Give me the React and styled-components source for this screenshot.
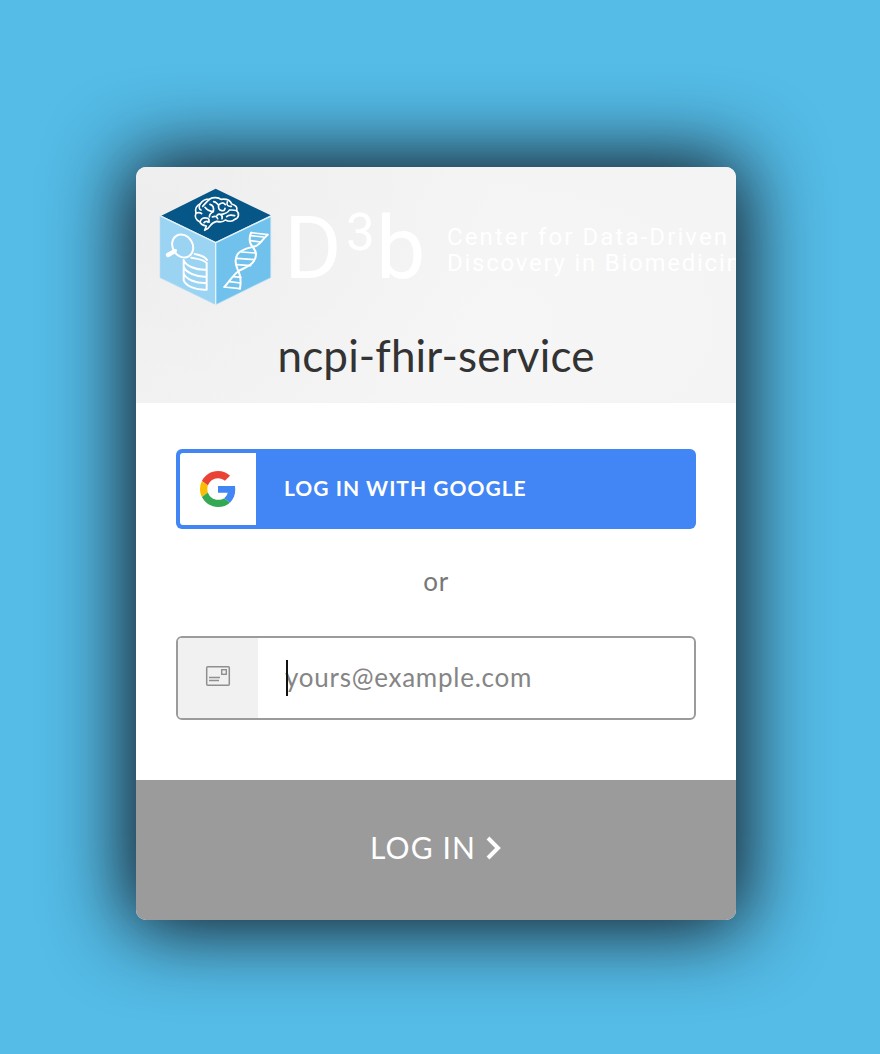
import React from 'react';
import styled, { createGlobalStyle } from 'styled-components';

const GlobalStyle = createGlobalStyle`
  * { box-sizing: border-box; }
  body {
    margin: 0;
    background: #54bce7;
    font-family: Lato, "Liberation Sans", sans-serif;
  }
`;

const Page = styled.main`
  min-height: 1054px;
  padding: 167px 0 0 136px;
  overflow: hidden;
`;

const Card = styled.form`
  width: 600px;
  height: 753px;
  margin: 0;
  display: flex;
  flex-direction: column;
  border-radius: 10px;
  background: #fff;
  box-shadow: 0 0 80px 8px #111118;
`;

const Header = styled.header`
  height: 236px;
  flex: none;
  overflow: hidden;
  border-radius: 10px 10px 0 0;
  background:
    radial-gradient(ellipse 360px 240px at 0 60px, rgba(232, 232, 232, 0.5), rgba(236, 236, 236, 0)),
    radial-gradient(ellipse 420px 260px at 60% 65%, #f6f6f6, #f3f3f3);
`;

const Brand = styled.div`
  display: flex;
  width: 760px;
  height: 148px;
  padding: 13px 0 0 14px;
  color: #fff;
  white-space: nowrap;
`;

const Cube = styled.svg`
  width: 130px;
  height: 135px;
  flex: none;
`;

const Wordmark = styled.div`
  display: flex;
  width: 167px;
  flex: none;
  padding: 26px 0 0 4px;
  font: 400 88px/84px Roboto, sans-serif;
`;

const Letter = styled.span`
  width: ${(p) => p.$width}px;
`;

const Power = styled.sup`
  width: 30px;
  font-size: 51px;
  line-height: 54px;
  vertical-align: baseline;
`;

const Tagline = styled.div`
  padding-top: 44px;
  font: 400 24px/26px Roboto, sans-serif;
`;

const TagLine = styled.div`
  letter-spacing: ${(p) => p.$spacing}px;
`;

const Title = styled.h1`
  margin: 14px 0 0;
  text-align: center;
  font-size: 44px;
  line-height: 52px;
  font-weight: 400;
  letter-spacing: 0.15px;
  font-variant-ligatures: none;
  color: #333;
`;

const Body = styled.section`
  flex: 1;
  padding: 46px 40px 0;
`;

const GoogleButton = styled.button`
  display: flex;
  align-items: center;
  width: 520px;
  height: 80px;
  padding: 4px;
  border: 0;
  border-radius: 6px;
  background: #4285f4;
  color: #fff;
  font: 700 21px/28px Lato, sans-serif;
  letter-spacing: 1px;
`;

const GoogleIconBox = styled.span`
  display: flex;
  align-items: center;
  justify-content: center;
  width: 76px;
  height: 72px;
  margin-right: 28px;
  border-radius: 3px 0 0 3px;
  background: #fff;
`;

const ButtonLabel = styled.span`
  padding-bottom: 3px;
`;

const Separator = styled.p`
  margin: 35px 0 37px;
  text-align: center;
  font-size: 26px;
  line-height: 35px;
  letter-spacing: 0.6px;
  color: #777;
`;

const Field = styled.label`
  display: flex;
  height: 84px;
  border: 2px solid #9b9b9b;
  border-radius: 6px;
  overflow: hidden;
`;

const FieldIcon = styled.span`
  display: flex;
  width: 80px;
  flex: none;
  padding: 27px 0 0 27px;
  background: #f1f1f1;
`;

const InputArea = styled.span`
  position: relative;
  flex: 1;
  display: flex;
`;

const Input = styled.input`
  width: 100%;
  height: 78px;
  padding: 0 0 0 27px;
  border: 0;
  outline: 0;
  background: transparent;
  font: 400 26px/36px Lato, sans-serif;
  letter-spacing: 0.75px;
  &::placeholder { color: #858585; opacity: 1; }
`;

const Caret = styled.i`
  position: absolute;
  left: 28px;
  top: 22px;
  width: 2px;
  height: 36px;
  background: #111;
`;

const Submit = styled.button`
  display: flex;
  align-items: center;
  justify-content: center;
  height: 140px;
  flex: none;
  padding: 0 0 4px;
  border: 0;
  border-radius: 0 0 10px 10px;
  background: #9b9b9b;
  color: #fff;
  font: 400 30px/40px Lato, sans-serif;
  letter-spacing: 1.1px;
`;

const SubmitLabel = styled.span`
  padding-bottom: 2px;
`;

const Chevron = styled.svg`
  width: 16px;
  height: 24px;
  margin-left: 10px;
`;

function CubeLogo() {
  return (
    <Cube viewBox="0 0 390 405" fill="none" stroke="#fff" strokeLinecap="round" strokeLinejoin="round">
      <path d="M34 107 197 187V374L30 293V110Z" fill="#9bd3f3" stroke="none" />
      <path d="M197 187 362 107V293L197 374Z" fill="#70c2ed" stroke="none" />
      <path d="M197 26 362 106 197 186 34 107Z" fill="#075688" stroke="none" />
      <path d="M30 110V293L197 374 362 293V110" stroke="#b9e0f6" strokeWidth="2" />
      <path d="M34 109 197 188 362 109M197 188V374" stroke="#e3f3fb" strokeWidth="4" />
      <g strokeWidth="5">
        <path d="M164 151 169 138C157 136 151 130 149 125C137 120 134 109 138 99C134 87 140 76 151 71C157 62 168 57 179 57C190 51 205 52 213 58C229 56 241 62 245 72C258 75 263 83 260 92C269 101 267 114 254 118C247 126 234 124 226 120C218 128 208 126 200 124C190 126 184 132 181 137C176 145 170 149 164 151Z" />
        <path d="M151 71C144 82 149 89 153 90M139 99C145 97 151 97 155 101M158 79C166 71 170 64 179 58M165 82C172 92 181 94 190 95M190 95C192 84 188 75 180 73M190 95C181 99 178 105 178 111M151 124C153 115 162 111 173 115C178 117 179 124 174 127M162 128C166 122 171 123 178 126M191 65C199 65 200 71 206 75M206 75C214 67 220 67 226 74M206 75C204 85 207 91 215 92C221 93 225 90 225 85M232 65C228 76 235 80 244 79M238 90H246C254 90 259 92 260 92M238 90C232 102 221 101 212 104M201 106C210 98 219 106 216 116M187 111C195 107 201 109 203 116M230 110C237 103 245 105 254 107" />
      </g>
      <ellipse cx="98" cy="198" rx="30" ry="36" transform="rotate(-30 98 198)" strokeWidth="6" />
      <path d="M73 214 54 225" strokeWidth="13" />
      <path d="M71 215 77 211" strokeWidth="8" />
      <g strokeWidth="6">
        <path d="M101 240V301C108 318 137 331 170 329V249M124 233C143 237 161 238 170 249M134 222C152 225 165 230 171 240M101 240C107 257 137 271 170 269M101 261C109 278 138 292 170 290M101 281C109 298 138 311 170 309" />
      </g>
      <g strokeWidth="6">
        <path d="M303 158C297 174 297 189 308 201C320 214 321 229 311 244C301 260 282 263 266 273C251 283 239 303 223 321" />
        <path d="M353 164C339 176 333 191 318 198C300 204 276 205 264 221C253 236 256 252 262 266C272 284 274 302 270 326" />
      </g>
      <g strokeWidth="5">
        <path d="M303 158 353 164M303 167 341 171M301 182 333 186M274 216 317 219M261 235 313 239M260 254 302 257M251 290 273 292M239 305 271 309M223 321 270 326" />
      </g>
    </Cube>
  );
}

function GoogleMark() {
  return (
    <svg width="36" height="36" viewBox="0 0 48 48">
      <path fill="#EA4335" d="M24 9.5c3.54 0 6.71 1.22 9.21 3.6l6.85-6.85C35.9 2.38 30.47 0 24 0 14.62 0 6.51 5.38 2.56 13.22l7.98 6.19C12.43 13.72 17.74 9.5 24 9.5z" />
      <path fill="#4285F4" d="M46.98 24.55c0-1.57-.15-3.09-.38-4.55H24v9.02h12.94c-.58 2.96-2.26 5.48-4.78 7.18l7.73 6c4.51-4.18 7.09-10.36 7.09-17.65z" />
      <path fill="#FBBC05" d="M10.53 28.59A14.5 14.5 0 0 1 9.77 24c0-1.6.27-3.14.76-4.59l-7.98-6.19A23.9 23.9 0 0 0 0 24c0 3.88.92 7.54 2.56 10.78l7.97-6.19z" />
      <path fill="#34A853" d="M24 48c6.48 0 11.93-2.13 15.89-5.81l-7.73-6c-2.15 1.45-4.92 2.3-8.16 2.3-6.26 0-11.57-4.22-13.47-9.91l-7.98 6.19C6.51 42.62 14.62 48 24 48z" />
    </svg>
  );
}

function MailIcon() {
  return (
    <svg width="26" height="22" viewBox="0 0 26 22" fill="none" stroke="#8f8f8f">
      <rect x="1.7" y="1.7" width="22.6" height="18.6" rx="1" strokeWidth="1.5" />
      <rect x="16.7" y="4.7" width="4.6" height="4.6" strokeWidth="1.4" />
      <path d="M4 12.5h11M4 15.5h10" strokeWidth="1.4" />
    </svg>
  );
}

export default function App() {
  return (
    <Page>
      <GlobalStyle />
      <Card onSubmit={(e) => e.preventDefault()}>
        <Header>
          <Brand>
            <CubeLogo />
            <Wordmark>
              <Letter $width={62}>D</Letter>
              <Power>3</Power>
              <Letter $width={60}>b</Letter>
            </Wordmark>
            <Tagline>
              <TagLine $spacing={2.1}>Center for Data-Driven</TagLine>
              <TagLine $spacing={1.75}>Discovery in Biomedicine</TagLine>
            </Tagline>
          </Brand>
          <Title>ncpi-fhir-service</Title>
        </Header>
        <Body>
          <GoogleButton type="button">
            <GoogleIconBox><GoogleMark /></GoogleIconBox>
            <ButtonLabel>LOG IN WITH GOOGLE</ButtonLabel>
          </GoogleButton>
          <Separator>or</Separator>
          <Field>
            <FieldIcon><MailIcon /></FieldIcon>
            <InputArea>
              <Input type="email" placeholder="yours@example.com" aria-label="Email" />
              <Caret />
            </InputArea>
          </Field>
        </Body>
        <Submit type="submit">
          <SubmitLabel>LOG IN</SubmitLabel>
          <Chevron viewBox="0 0 16 24" fill="none" stroke="#fff" strokeWidth="4">
            <path d="M2 2 12 12 2 22" />
          </Chevron>
        </Submit>
      </Card>
    </Page>
  );
}
